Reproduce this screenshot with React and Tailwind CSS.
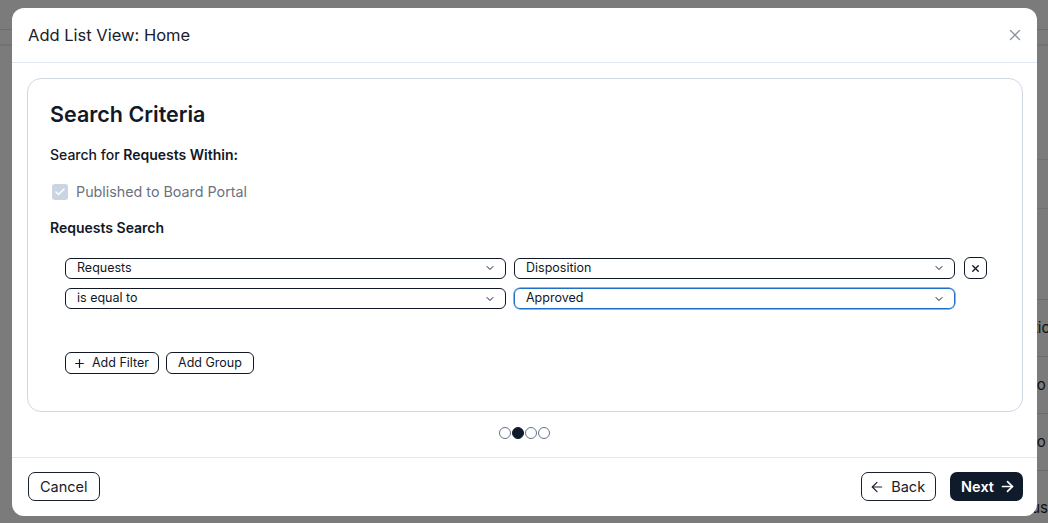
import { ArrowLeft, ArrowRight, X, Plus, ChevronDown, Check } from "lucide-react";

function SelectBox({ value, focused }) {
  return (
    <div
      className={`flex h-[21px] w-[441px] items-center justify-between rounded-[6px] border pl-[11px] pr-[9px] text-[12.5px] text-[#111827] ${
        focused ? "border-[#1f6fc5] shadow-[0_0_0_0.5px_#1f6fc5]" : "border-[#111827]"
      }`}
    >
      <span>{value}</span>
      <ChevronDown size={12} strokeWidth={2} className="text-[#111827]" />
    </div>
  );
}

function Dot({ active }) {
  return (
    <span
      className={`size-[12px] rounded-full border ${
        active ? "border-[#0f1b2a] bg-[#0f1b2a]" : "border-[#64748b] bg-white"
      }`}
    />
  );
}

// page behind the modal, mostly hidden
function Backdrop() {
  return (
    <div className="h-[523px] w-[1048px] overflow-hidden whitespace-nowrap bg-[#7b7b7b] text-[15px] text-[#111]">
      <div className="h-[30px] border-b border-[#6c6c6c]" />
      <div className="h-[16px] border-b-2 border-[#727272]" />
      <div className="ml-[600px] h-[114px] border-b border-[#727272]" />
      <div className="ml-[600px] h-[49px] border-b border-[#727272]" />
      <div className="ml-[600px] h-[91px] border-b border-[#6c6c6c]" />
      <div className="ml-[600px] flex h-[57px] items-center border-b border-[#6c6c6c] pl-[414px]">Action</div>
      <div className="ml-[600px] flex h-[57px] items-center border-b border-[#6c6c6c] pl-[426px]">Do</div>
      <div className="ml-[600px] flex h-[57px] items-center border-b border-[#6c6c6c] pl-[426px]">Do</div>
      <div className="flex h-[43px]">
        <div className="ml-[43px] h-full w-[14px] border-x border-[#555]" />
        <div className="ml-[24px] mt-[20px] flex h-[20px] w-[84px] rounded-[5px] border border-[#222]">
          <div className="w-[58px] border-r border-[#222]" />
        </div>
        <span className="ml-[858px] mt-[27px] leading-[20px]">Status</span>
      </div>
    </div>
  );
}

export default function App() {
  return (
    <div className="relative h-[523px] w-[1048px] overflow-hidden font-['Inter',sans-serif]">
      <Backdrop />

      {/* modal */}
      <div className="absolute left-[12px] top-[8px] flex h-[508px] w-[1025px] flex-col rounded-[12px] bg-white">
        <div className="flex h-[55px] items-center justify-between border-b border-[#e2e8f0] pl-[16px] pr-[13px]">
          <h2 className="text-[16.5px] font-normal text-[#1a202c]">Add List View: Home</h2>
          <X size={18} strokeWidth={1.7} className="text-[#8a939e]" />
        </div>

        <div className="flex flex-1 flex-col pl-[15px] pr-[14px] pt-[15px]">
          <div className="rounded-[14px] border border-[#cfd8e3] pb-[37px] pl-[22px] pt-[21px]">
            <h3 className="text-[21.5px] leading-[28px] font-semibold text-[#111827]">Search Criteria</h3>
            <p className="mt-[17px] text-[14px] leading-[20px] font-medium text-[#111827]">
              Search for <span className="font-semibold">Requests Within:</span>
            </p>
            <label className="mt-[17px] flex items-center gap-[8px] pl-[2px] text-[14.3px] leading-[20px] text-[#6b7280]">
              <span className="flex size-[16px] items-center justify-center rounded-[3px] bg-[#cbd5e1]">
                <Check size={12} strokeWidth={3} className="text-white" />
              </span>
              Published to Board Portal
            </label>
            <p className="mt-[16px] text-[14px] leading-[20px] font-semibold text-[#111827]">Requests Search</p>

            <div className="mt-[19px] flex flex-col gap-[9px] pl-[15px]">
              <div className="flex items-center gap-[8px]">
                <SelectBox value="Requests" />
                <SelectBox value="Disposition" />
                <button className="ml-[1px] flex h-[22px] w-[23px] items-center justify-center rounded-[6px] border border-[#111827] text-[#111827]">
                  <X size={11} strokeWidth={3} />
                </button>
              </div>
              <div className="flex items-center gap-[8px]">
                <SelectBox value="is equal to" />
                <SelectBox value="Approved" focused />
              </div>
            </div>

            <div className="mt-[43px] flex gap-[7px] pl-[15px]">
              <button className="flex h-[22px] items-center gap-[6px] rounded-[6px] border border-[#111827] pl-[7px] pr-[9px] text-[12.5px] text-[#111827]">
                <Plus size={13} strokeWidth={2.2} />
                Add Filter
              </button>
              <button className="flex h-[22px] items-center rounded-[6px] border border-[#111827] px-[11px] text-[12.5px] text-[#111827]">
                Add Group
              </button>
            </div>
          </div>

          <div className="flex flex-1 items-center justify-center gap-[1px] pb-[4px] pr-[1px]">
            <Dot />
            <Dot active />
            <Dot />
            <Dot />
          </div>
        </div>

        <div className="flex h-[59px] items-center justify-between border-t border-[#e2e8f0] pb-[1px] pl-[16px] pr-[14px]">
          <button className="h-[29px] rounded-[7px] border border-[#1a202c] px-[11px] text-[14.5px] text-[#1a202c]">
            Cancel
          </button>
          <div className="flex gap-[14px]">
            <button className="flex h-[29px] items-center gap-[6px] rounded-[7px] border border-[#1a202c] pl-[7px] pr-[10px] text-[14.5px] text-[#1a202c]">
              <ArrowLeft size={16} strokeWidth={1.8} />
              Back
            </button>
            <button className="flex h-[29px] items-center gap-[5px] rounded-[7px] bg-[#0f1b2a] pl-[11px] pr-[7px] text-[14.5px] font-semibold text-white">
              Next
              <ArrowRight size={17} strokeWidth={2.4} />
            </button>
          </div>
        </div>
      </div>
    </div>
  );
}
